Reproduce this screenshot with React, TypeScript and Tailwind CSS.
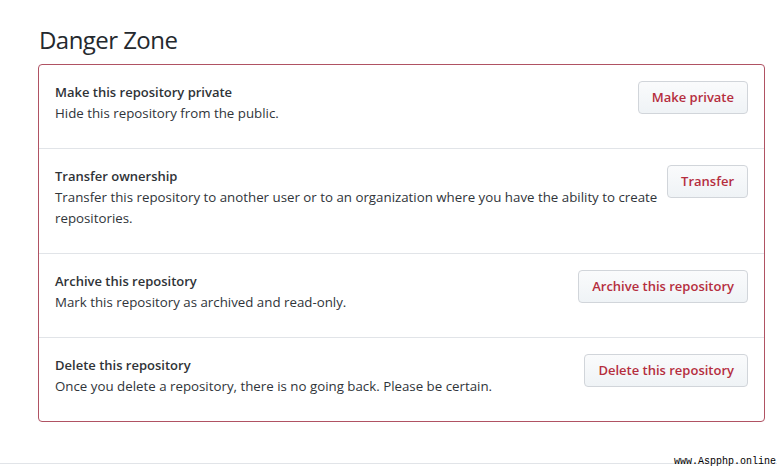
import React from 'react';

const rows = [
  { title: 'Make this repository private', desc: 'Hide this repository from the public.', action: 'Make private' },
  {
    title: 'Transfer ownership',
    desc: 'Transfer this repository to another user or to an organization where you have the ability to create repositories.',
    action: 'Transfer',
  },
  { title: 'Archive this repository', desc: 'Mark this repository as archived and read-only.', action: 'Archive this repository' },
  {
    title: 'Delete this repository',
    desc: 'Once you delete a repository, there is no going back. Please be certain.',
    action: 'Delete this repository',
  },
];

export default function App() {
  return (
    <div className="relative w-[777px] h-[468px] bg-white text-[#24292e] font-['Open_Sans',sans-serif] overflow-hidden">
      <div className="pl-[38px] pr-[12px] pt-[24px]">
        <h2 className="text-[24px] font-normal leading-[32px] mb-[8px] ml-[1px] tracking-[-0.55px]">Danger Zone</h2>
        <div className="border border-[#b05263] rounded-[4px]">
          {rows.map((row, i) => (
            <div
              key={row.title}
              className={`flex items-start justify-between gap-[8px] pl-[16px] pr-[16px] pt-[16px] pb-[24px] ${i > 0 ? 'border-t border-[#e1e4e8]' : ''}`}
            >
              <div className="pt-[1px]">
                <div className="text-[13px] font-semibold leading-[21px] text-[#2f3337]">{row.title}</div>
                <div className="text-[13.3px] leading-[21px] text-[#30353a]">{row.desc}</div>
              </div>
              <button className="shrink-0 h-[33px] px-[13px] rounded-[4px] border border-[#d1d5da] bg-gradient-to-b from-[#fafbfc] to-[#eff3f6] text-[13px] font-semibold text-[#b52e3e] whitespace-nowrap">
                {row.action}
              </button>
            </div>
          ))}
        </div>
      </div>
      <div className="absolute left-0 right-0 top-[463px] border-t border-[#e1e4e8]" />
      <div className="absolute right-[1px] top-[456px] text-[10px] leading-[12px] text-black font-['Liberation_Mono',monospace]">
        www.Aspphp.online
      </div>
    </div>
  );
}
